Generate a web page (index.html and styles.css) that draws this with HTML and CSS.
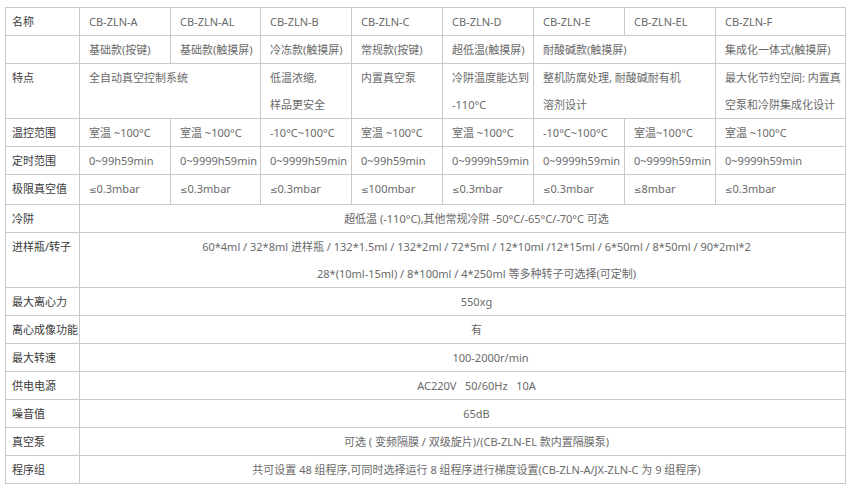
FILE: index.html
```html
<!DOCTYPE html>
<html lang="zh-CN">
<head>
<meta charset="utf-8">
<title>CB-ZLN 参数表</title>
<link rel="stylesheet" href="styles.css">
</head>
<body>
<div class="wrap">
<table class="spec">
<colgroup>
<col class="c-label">
<col class="c-std"><col class="c-std2"><col class="c-std"><col class="c-std">
<col class="c-std"><col class="c-std"><col class="c-std"><col class="c-last">
</colgroup>
<tbody>
<tr><td class="label">名称</td><td>CB-ZLN-A</td><td>CB-ZLN-AL</td><td>CB-ZLN-B</td><td>CB-ZLN-C</td><td>CB-ZLN-D</td><td>CB-ZLN-E</td><td>CB-ZLN-EL</td><td>CB-ZLN-F</td></tr>
<tr><td class="label"></td><td>基础款(按键)</td><td>基础款(触摸屏)</td><td>冷冻款(触摸屏)</td><td>常规款(按键)</td><td>超低温(触摸屏)</td><td colspan="2">耐酸碱款(触摸屏)</td><td>集成化一体式(触摸屏)</td></tr>
<tr class="tall"><td class="label">特点</td><td colspan="2">全自动真空控制系统</td><td>低温浓缩,<br>样品更安全</td><td>内置真空泵</td><td>冷阱温度能达到<br>-110°C</td><td colspan="2">整机防腐处理, 耐酸碱耐有机<br>溶剂设计</td><td>最大化节约空间: 内置真<br>空泵和冷阱集成化设计</td></tr>
<tr><td class="label">温控范围</td><td>室温 ~100°C</td><td>室温 ~100°C</td><td>-10°C~100°C</td><td>室温 ~100°C</td><td>室温 ~100°C</td><td>-10°C~100°C</td><td>室温~100°C</td><td>室温 ~100°C</td></tr>
<tr><td class="label">定时范围</td><td>0~99h59min</td><td>0~9999h59min</td><td>0~9999h59min</td><td>0~99h59min</td><td>0~9999h59min</td><td>0~9999h59min</td><td>0~9999h59min</td><td>0~9999h59min</td></tr>
<tr><td class="label">极限真空值</td><td><span class="le">≤</span>0.3mbar</td><td><span class="le">≤</span>0.3mbar</td><td><span class="le">≤</span>0.3mbar</td><td><span class="le">≤</span>100mbar</td><td><span class="le">≤</span>0.3mbar</td><td><span class="le">≤</span>0.3mbar</td><td><span class="le">≤</span>8mbar</td><td><span class="le">≤</span>0.3mbar</td></tr>
<tr><td class="label">冷阱</td><td colspan="8" class="span">超低温 (-110°C),其他常规冷阱 -50°C/-65°C/-70°C 可选</td></tr>
<tr><td class="label">进样瓶/转子</td><td colspan="8" class="span">60*4ml / 32*8ml 进样瓶 / 132*1.5ml / 132*2ml / 72*5ml / 12*10ml /12*15ml / 6*50ml / 8*50ml / 90*2ml*2<br>28*(10ml-15ml) / 8*100ml / 4*250ml 等多种转子可选择(可定制)</td></tr>
<tr><td class="label">最大离心力</td><td colspan="8" class="span">550xg</td></tr>
<tr><td class="label">离心成像功能</td><td colspan="8" class="span">有</td></tr>
<tr><td class="label">最大转速</td><td colspan="8" class="span span-shift">100-2000r/min</td></tr>
<tr><td class="label">供电电源</td><td colspan="8" class="span">AC220V&nbsp;&nbsp;&nbsp;50/60Hz&nbsp;&nbsp;&nbsp;10A</td></tr>
<tr><td class="label">噪音值</td><td colspan="8" class="span">65dB</td></tr>
<tr><td class="label">真空泵</td><td colspan="8" class="span">可选 ( 变频隔膜 / 双级旋片)/(CB-ZLN-EL 款内置隔膜泵)</td></tr>
<tr><td class="label">程序组</td><td colspan="8" class="span">共可设置 48 组程序,可同时选择运行 8 组程序进行梯度设置(CB-ZLN-A/JX-ZLN-C 为 9 组程序)</td></tr>
</tbody>
</table>
</div>
</body>
</html>
```
FILE: styles.css
```css
html, body {
  margin: 0;
  padding: 0;
  background: #ffffff;
}
.wrap {
  padding: 7px 0 0 5px;
}
.spec {
  border-collapse: collapse;
  table-layout: fixed;
  width: 841px;
  font-family: "Noto Sans", "Noto Sans CJK SC", sans-serif;
  font-size: 11px;
  color: #6a6a6a;
}
.c-label { width: 74px; }
.c-std { width: 91px; }
.c-std2 { width: 90px; }
.c-last { width: 130px; }
.spec td {
  border: 1px solid #c9c9c9;
  padding: 0 0 0 9px;
  line-height: 27px;
  height: 27px;
  vertical-align: top;
  text-align: left;
  white-space: nowrap;
  overflow: hidden;
}
.spec td.label {
  padding-left: 6px;
  color: #3a3a3a;
}
.spec td.span {
  text-align: center;
  padding-left: 34px;
  padding-right: 6px;
}
.spec td.span-shift {
  padding-left: 62px;
}
.le {
  font-family: "DejaVu Sans", sans-serif;
  font-size: 9px;
}
```
